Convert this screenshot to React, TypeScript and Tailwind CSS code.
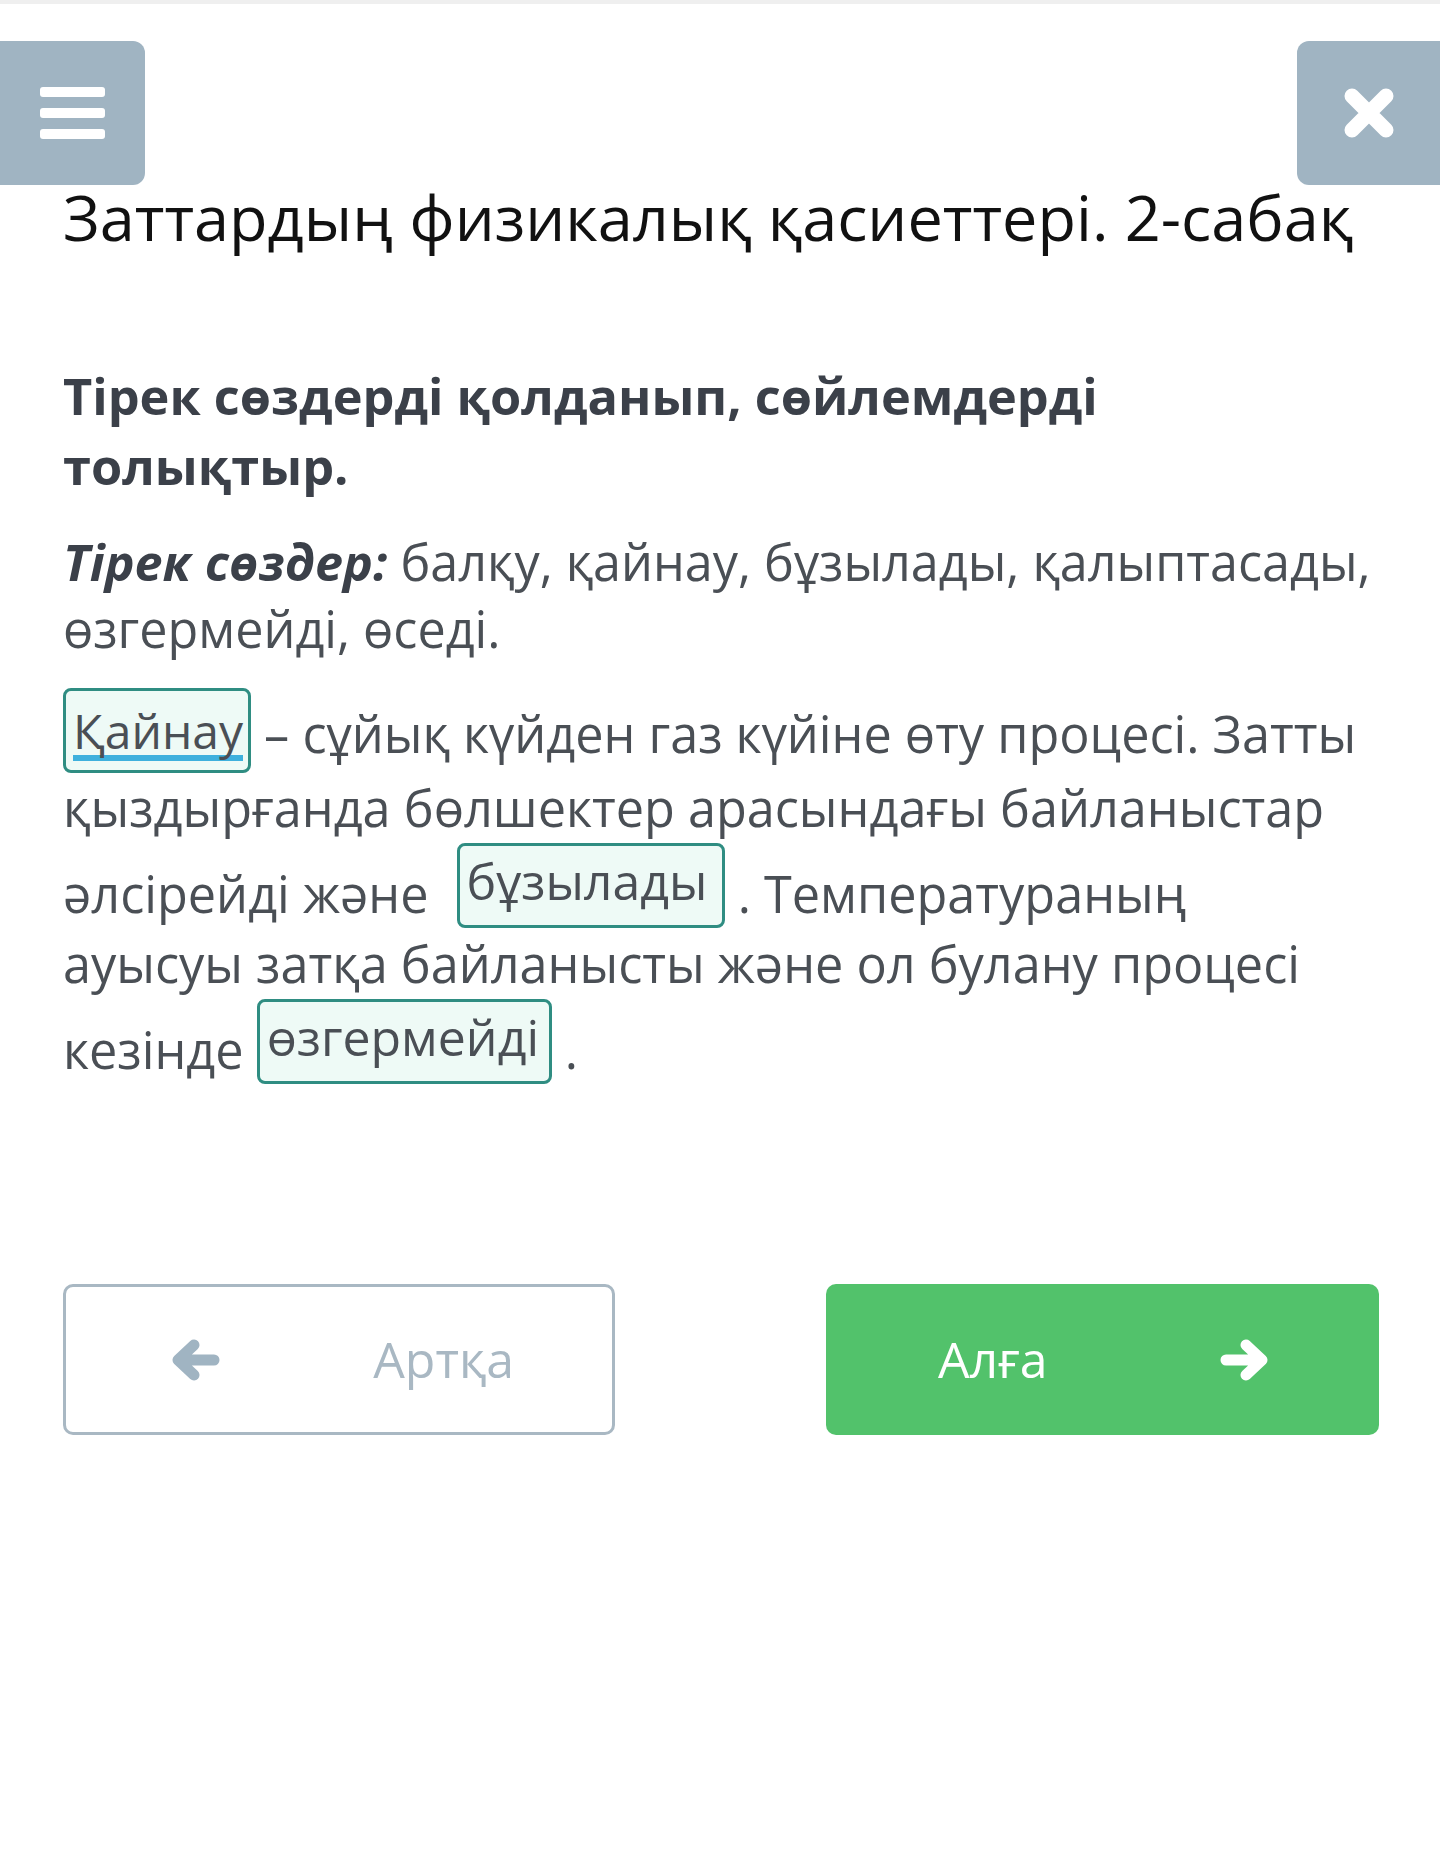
import React from "react";

const font = { fontFamily: '"Open Sans", "Noto Sans", sans-serif' };

function Blank({
  word,
  underline,
  lift,
  className,
}: {
  word: string;
  underline?: boolean;
  lift: "low" | "high";
  className?: string;
}) {
  return (
    <span
      className={
        "inline-block box-border h-[85px] rounded-lg border-[3px] border-[#2f8d82] bg-[#eefaf6] pl-[7px] text-[50px] leading-[60px] text-[#4a4f55] " +
        (lift === "low" ? "pt-[9px] align-[4px] " : "pt-[5px] align-[13px] ") +
        (className ?? "")
      }
    >
      <span
        className={
          underline
            ? "inline-block border-b-[6px] border-[#3eb0dd] text-[48px] leading-[49px]"
            : ""
        }
      >
        {word}
      </span>
    </span>
  );
}

function ArrowLeft({ color }: { color: string }) {
  return (
    <svg width="50" height="42" viewBox="0 0 50 42" fill="none">
      <path
        d="M44 21 H10 M24 6 L8 21 L24 36"
        stroke={color}
        strokeWidth="11"
        strokeLinecap="round"
        strokeLinejoin="round"
      />
    </svg>
  );
}

function ArrowRight({ color }: { color: string }) {
  return (
    <svg width="50" height="42" viewBox="0 0 50 42" fill="none">
      <path
        d="M6 21 H40 M26 6 L42 21 L26 36"
        stroke={color}
        strokeWidth="11"
        strokeLinecap="round"
        strokeLinejoin="round"
      />
    </svg>
  );
}

export default function App() {
  return (
    <div
      className="min-h-[1876px] w-[1440px] border-t-4 border-[#efefef] bg-white"
      style={font}
    >
      {/* header */}
      <div className="mt-[37px] flex h-[144px] items-stretch justify-between">
        <button className="flex w-[145px] flex-col items-center justify-center gap-[11px] rounded-r-xl bg-[#a0b4c2]">
          <span className="block h-[10px] w-[65px] rounded-[3px] bg-white" />
          <span className="block h-[10px] w-[65px] rounded-[3px] bg-white" />
          <span className="block h-[10px] w-[65px] rounded-[3px] bg-white" />
        </button>
        <button className="flex w-[143px] items-center justify-center rounded-l-xl bg-[#a0b4c2]">
          <svg width="54" height="52" viewBox="0 0 54 52">
            <path
              d="M10 9 L44 43 M44 9 L10 43"
              stroke="white"
              strokeWidth="15"
              strokeLinecap="round"
            />
          </svg>
        </button>
      </div>

      <div className="px-[63px]">
        <h1 className="whitespace-nowrap text-[63px] leading-[64px] font-normal text-[#111]">
          Заттардың физикалық қасиеттері. 2-сабақ
        </h1>

        <div className="w-[1330px] whitespace-nowrap">
          <p className="mt-[112px] text-[50.5px] leading-[70px] font-bold text-[#3b4049]">
            Тірек сөздерді қолданып, сөйлемдерді
            <br />
            толықтыр.
          </p>

          <p className="mt-[27px] text-[50.3px] leading-[67px] text-[#4a4f55]">
            <b className="font-bold italic text-[#3b4049]">Тірек сөздер:</b>{" "}
            балқу, қайнау, бұзылады, қалыптасады,
            <br />
            өзгермейді, өседі.
          </p>

          <p className="mt-[26px] text-[50.4px] leading-[70px] text-[#4a4f55]">
            <Blank word="Қайнау" underline lift="low" className="w-[188px]" />{" "}
            – сұйық күйден газ күйіне өту процесі. Затты
            <br />
            қыздырғанда бөлшектер арасындағы байланыстар
            <br />
            әлсірейді және{" "}
            <Blank word="бұзылады" lift="high" className="ml-[15px] w-[268px]" />{" "}
            . Температураның
            <br />
            ауысуы затқа байланысты және ол булану процесі
            <br />
            кезінде <Blank word="өзгермейді" lift="high" className="w-[295px]" />{" "}
            .
          </p>
        </div>

        <div className="mt-[199px] flex w-[1316px] justify-between">
          <button className="flex h-[151px] w-[552px] items-center justify-between rounded-[10px] border-[3px] border-[#a9b8c3] bg-white pl-[104px] pr-[98px] text-[50px] text-[#a9b8c3]">
            <ArrowLeft color="#a0b4c2" />
            <span>Артқа</span>
          </button>
          <button className="flex h-[151px] w-[553px] items-center justify-between rounded-[10px] bg-[#52c26b] pl-[112px] pr-[109px] text-[50px] text-white">
            <span>Алға</span>
            <ArrowRight color="white" />
          </button>
        </div>
      </div>
    </div>
  );
}
